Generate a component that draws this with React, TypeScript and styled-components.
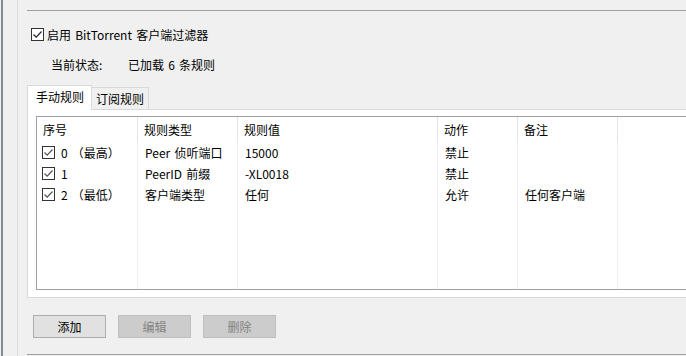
import React from "react";
import styled, { createGlobalStyle } from "styled-components";

const Global = createGlobalStyle`
  html, body { margin: 0; padding: 0; background: #f0f0f0; }
  body { font-family: "Noto Sans CJK SC", "Noto Sans", sans-serif; font-size: 12px; color: #000; word-spacing: 1.5px; }
`;

const Window = styled.div`
  width: 686px;
  height: 356px;
  overflow: hidden;
  display: flex;
  background: #f0f0f0;
`;

const EdgeGap = styled.div`
  width: 1px;
  flex: none;
`;

const DarkRule = styled.div`
  width: 2px;
  flex: none;
  background: #878b92;
`;

const Gutter = styled.div`
  width: 14px;
  flex: none;
`;

const SideRule = styled.div`
  width: 1px;
  flex: none;
  background: #dcdcdc;
`;

const Main = styled.div`
  flex: none;
  width: 720px;
  padding-left: 9px;
  display: flex;
  flex-direction: column;
`;

const HRule = styled.div<{ $top: number }>`
  margin-top: ${(p) => p.$top}px;
  height: 1px;
  background: #a0a0a0;
`;

const CheckRow = styled.label`
  margin-top: 17px;
  height: 13px;
  padding-left: 4px;
  display: flex;
  align-items: center;
  gap: 3px;
  line-height: 13px;
  white-space: nowrap;
`;

const Box = styled.span<{ $tone: string }>`
  width: 13px;
  height: 13px;
  box-sizing: border-box;
  border: 1px solid #333;
  background: #fff;
  display: inline-flex;
  align-items: center;
  justify-content: center;
  flex: none;
  color: ${(p) => p.$tone};
`;

const StatusRow = styled.div`
  margin-top: 17px;
  height: 14px;
  padding-left: 24px;
  display: flex;
  align-items: center;
  line-height: 14px;
  white-space: nowrap;
`;

const StatusLabel = styled.span`
  width: 77px;
  flex: none;
`;

const TabStrip = styled.div`
  margin-top: 13px;
  height: 24px;
  display: flex;
  align-items: flex-end;
`;

const Tab = styled.div<{ $active?: boolean }>`
  box-sizing: border-box;
  height: ${(p) => (p.$active ? 25 : 22)}px;
  margin-bottom: ${(p) => (p.$active ? -1 : 0)}px;
  padding: ${(p) => (p.$active ? "0 7px 0 8px" : "0 4px 0 4px")};
  background: ${(p) => (p.$active ? "#fff" : "#f0f0f0")};
  border: 1px solid #d9d9d9;
  border-bottom: none;
  border-left: ${(p) => (p.$active ? "1px solid #d9d9d9" : "none")};
  position: relative;
  z-index: ${(p) => (p.$active ? 1 : 0)};
  display: flex;
  align-items: center;
  white-space: nowrap;
  line-height: 14px;
  padding-bottom: ${(p) => (p.$active ? 2 : 0)}px;
`;

const Panel = styled.div`
  box-sizing: border-box;
  height: 189px;
  background: #fff;
  border: 1px solid #d9d9d9;
  border-right: none;
  padding: 6px 0 7px 8px;
  display: flex;
`;

const ListView = styled.div`
  flex: 1;
  box-sizing: border-box;
  border: 1px solid #a0a0a0;
  border-right: none;
  display: flex;
  flex-direction: column;
  background: #fff;
`;

const Row = styled.div<{ $h?: number; $fill?: boolean }>`
  display: flex;
  height: ${(p) => (p.$h ? `${p.$h}px` : "auto")};
  flex: ${(p) => (p.$fill ? 1 : "none")};
`;

const Cell = styled.div<{ $w: number; $line: string; $pad?: number }>`
  box-sizing: border-box;
  width: ${(p) => p.$w}px;
  flex: none;
  border-right: 1px solid ${(p) => p.$line};
  padding-left: ${(p) => (p.$pad ?? 6)}px;
  display: flex;
  align-items: center;
  white-space: nowrap;
  line-height: 14px;
`;

const RowText = styled.span`
  margin-left: 6px;
`;

const ButtonRow = styled.div`
  margin-top: 17px;
  padding-left: 6px;
  display: flex;
  gap: 12px;
`;

const Button = styled.button<{ $disabled?: boolean }>`
  box-sizing: border-box;
  width: 73px;
  height: 23px;
  margin: 0;
  padding: 0;
  font: inherit;
  line-height: 14px;
  background: ${(p) => (p.$disabled ? "#cccccc" : "#e1e1e1")};
  border: 1px solid ${(p) => (p.$disabled ? "#bfbfbf" : "#adadad")};
  color: ${(p) => (p.$disabled ? "#838383" : "#000")};
  border-radius: 0;
`;

const Check = () => (
  <svg width="11" height="11" viewBox="0 0 11 11">
    <polyline points="1.5,5.5 4.2,8.2 9.5,2.5" fill="none" stroke="currentColor" strokeWidth="1.2" />
  </svg>
);

const cols = [101, 100, 200, 80, 100, 200];
const headers = ["序号", "规则类型", "规则值", "动作", "备注", ""];
const rows = [
  ["0 （最高）", "Peer 侦听端口", "15000", "禁止", ""],
  ["1", "PeerID 前缀", "-XL0018", "禁止", ""],
  ["2 （最低）", "客户端类型", "任何", "允许", "任何客户端"],
];

export default function App() {
  return (
    <>
      <Global />
      <Window>
        <EdgeGap />
        <DarkRule />
        <Gutter />
        <SideRule />
        <Main>
          <HRule $top={10} />
          <CheckRow>
            <Box $tone="#222">
              <Check />
            </Box>
            启用 BitTorrent 客户端过滤器
          </CheckRow>
          <StatusRow>
            <StatusLabel>当前状态:</StatusLabel>
            <span>已加载 6 条规则</span>
          </StatusRow>
          <TabStrip>
            <Tab $active>手动规则</Tab>
            <Tab>订阅规则</Tab>
          </TabStrip>
          <Panel>
            <ListView>
              <Row $h={25}>
                {headers.map((h, i) => (
                  <Cell key={i} $w={cols[i]} $line={i === 5 ? "transparent" : "#e5e5e5"}>
                    {h}
                  </Cell>
                ))}
              </Row>
              {rows.map((r, ri) => (
                <Row key={ri} $h={21}>
                  {cols.map((w, i) => (
                    <Cell key={i} $w={w} $line={i === 5 ? "transparent" : "#eaf0f6"} $pad={i === 0 ? 5 : 7}>
                      {i === 0 ? (
                        <>
                          <Box $tone="#555">
                            <Check />
                          </Box>
                          <RowText>{r[0]}</RowText>
                        </>
                      ) : (
                        r[i] ?? ""
                      )}
                    </Cell>
                  ))}
                </Row>
              ))}
              <Row $fill>
                {cols.map((w, i) => (
                  <Cell key={i} $w={w} $line={i === 5 ? "transparent" : "#eaf0f6"} />
                ))}
              </Row>
            </ListView>
          </Panel>
          <ButtonRow>
            <Button>添加</Button>
            <Button $disabled disabled>编辑</Button>
            <Button $disabled disabled>删除</Button>
          </ButtonRow>
          <HRule $top={16} />
        </Main>
      </Window>
    </>
  );
}
